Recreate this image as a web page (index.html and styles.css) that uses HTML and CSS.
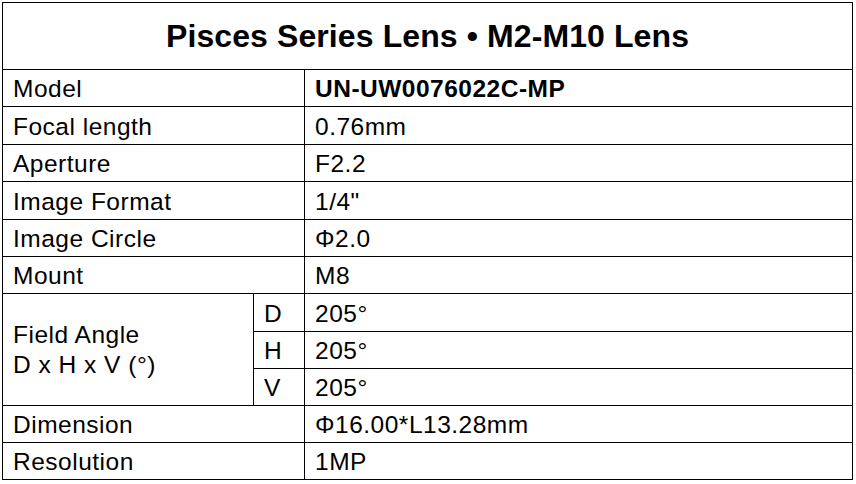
FILE: index.html
```html
<!DOCTYPE html>
<html>
<head>
<meta charset="utf-8">
<link rel="stylesheet" href="styles.css">
</head>
<body>
<table class="spec">
  <colgroup>
    <col class="c1"><col class="c2"><col class="c3">
  </colgroup>
  <tr class="title-row"><th colspan="3" class="title">Pisces Series Lens • M2-M10 Lens</th></tr>
  <tr class="r37"><td colspan="2">Model</td><td class="bold">UN-UW0076022C-MP</td></tr>
  <tr class="r38"><td colspan="2">Focal length</td><td>0.76mm</td></tr>
  <tr class="r37"><td colspan="2">Aperture</td><td>F2.2</td></tr>
  <tr class="r38"><td colspan="2">Image Format</td><td>1/4"</td></tr>
  <tr class="r37"><td colspan="2">Image Circle</td><td>Φ2.0</td></tr>
  <tr class="r37"><td colspan="2">Mount</td><td>M8</td></tr>
  <tr class="r38"><td rowspan="3" class="multi">Field Angle<br>D x H x V (°)</td><td>D</td><td>205°</td></tr>
  <tr class="r37"><td>H</td><td>205°</td></tr>
  <tr class="r37"><td>V</td><td>205°</td></tr>
  <tr class="r37"><td colspan="2">Dimension</td><td>Φ16.00*L13.28mm</td></tr>
  <tr class="r37"><td colspan="2">Resolution</td><td>1MP</td></tr>
</table>
</body>
</html>
```
FILE: styles.css
```css
html, body {
  margin: 0;
  padding: 0;
  background: #fff;
}
body {
  padding: 2px 0 0 2px;
  font-family: "Liberation Sans", Arial, sans-serif;
  color: #000;
}
.spec {
  border-collapse: collapse;
  table-layout: fixed;
  width: 851px;
}
.c1 { width: 251px; }
.c2 { width: 51px; }
.c3 { width: auto; }
.spec th, .spec td {
  border: 1px solid #000;
  padding: 1px 10px 0 10px;
  font-size: 24.5px;
  letter-spacing: 0.5px;
  line-height: 27px;
  text-align: left;
  white-space: nowrap;
  vertical-align: middle;
}
.title-row { height: 67px; }
.r38 { height: 38px; }
.r37 { height: 37px; }
.spec .title {
  font-size: 32px;
  font-weight: bold;
  letter-spacing: 0.1px;
  text-align: center;
  padding: 0;
  line-height: 36px;
}
.bold { font-weight: bold; }
.spec .multi {
  line-height: 30px;
  padding-top: 0;
}
```
